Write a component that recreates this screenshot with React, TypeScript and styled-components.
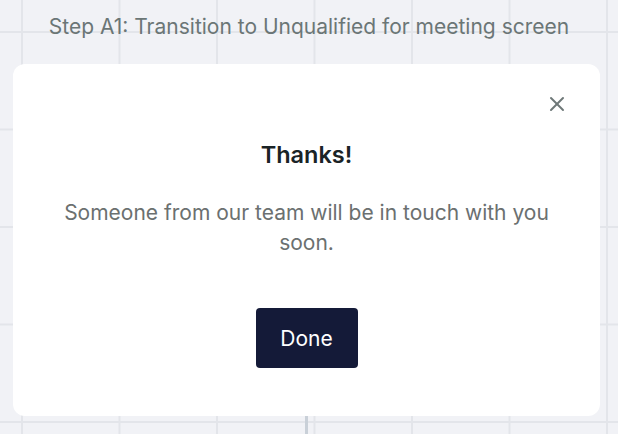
import styled, { createGlobalStyle } from 'styled-components'
import { X } from 'lucide-react'

const GlobalStyle = createGlobalStyle`
  html, body {
    margin: 0;
    padding: 0;
  }
  body {
    font-family: Inter, "Noto Sans", sans-serif;
    background-color: #f1f2f6;
    background-image:
      linear-gradient(to right, #e3e5ea 2px, transparent 2px),
      linear-gradient(to bottom, #e3e5ea 2px, transparent 2px);
    background-size: 97.5px 97.5px;
    background-position: 21px 31px;
    min-height: 434px;
    overflow: hidden;
  }
`

export default function App() {
  return (
    <>
      <GlobalStyle />
      <Canvas>
        {/* 스텝 제목 */}
        <StepTitle>Step A1: Transition to Unqualified for meeting screen</StepTitle>

        {/* 모달 */}
        <Modal>
          <CloseBtn aria-label="Close">
            <X size={24} strokeWidth={2} />
          </CloseBtn>
          <Heading>Thanks!</Heading>
          <Message>Someone from our team will be in touch with you soon.</Message>
          <DoneBtn>Done</DoneBtn>
        </Modal>

        <Connector />
      </Canvas>
    </>
  )
}

// CANVAS
const Canvas = styled.div`
  display: flex;
  flex-direction: column;
  width: 618px;
  height: 434px;
`

// TITLE
const StepTitle = styled.div`
  padding-top: 14px;
  text-align: center;
  font-size: 21px;
  line-height: 26px;
  color: #6b7676;
`

// MODAL BOX
const Modal = styled.div`
  position: relative;
  box-sizing: border-box;
  margin: 24px 0 0 13px;
  width: 587px;
  height: 352px;
  padding: 77px 30px 0;
  background: #fff;
  border-radius: 12px;
  display: flex;
  flex-direction: column;
  align-items: center;
`

// X BTN
const CloseBtn = styled.button`
  position: absolute;
  right: 31px;
  top: 28px;
  display: flex;
  padding: 0;
  border: none;
  background: none;
  color: #6e7878;
  cursor: pointer;
`

const Heading = styled.h2`
  margin: 0;
  font-size: 23.5px;
  line-height: 28px;
  font-weight: 600;
  color: #1a2326;
`

const Message = styled.p`
  margin: 29px 0 0;
  max-width: 500px;
  text-align: center;
  font-size: 21px;
  line-height: 30px;
  color: #6b7070;
`

const DoneBtn = styled.button`
  margin-top: 50px;
  width: 102px;
  height: 60px;
  border: none;
  border-radius: 4px;
  background: #141a38;
  color: #fff;
  font-family: Inter, "Noto Sans", sans-serif;
  font-size: 21px;
  cursor: pointer;
`

// CONNECTOR LINE
const Connector = styled.div`
  margin-left: 305px;
  width: 3px;
  flex: 1;
  background: #c9d0d8;
`
